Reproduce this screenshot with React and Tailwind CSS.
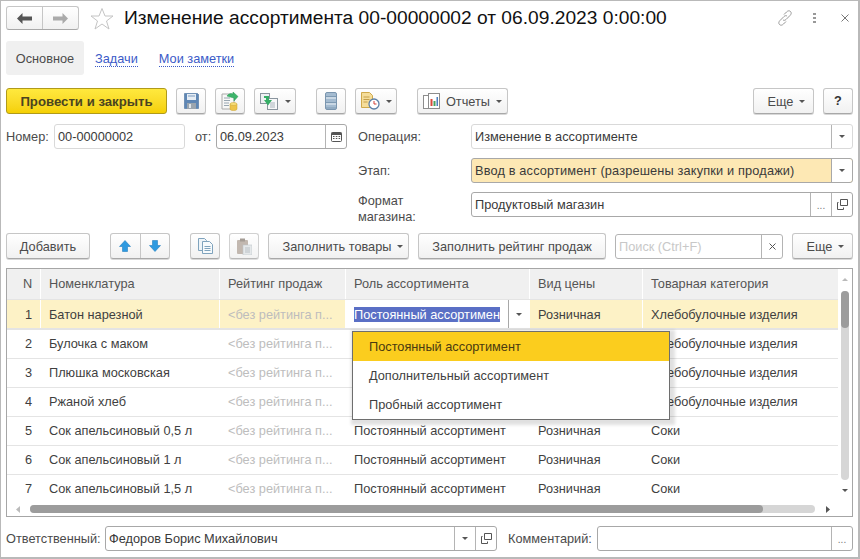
const rows = [
  ['1', 'Батон нарезной', 'Хлебобулочные изделия'],
  ['2', 'Булочка с маком', 'Хлебобулочные изделия'],
  ['3', 'Плюшка московская', 'Хлебобулочные изделия'],
  ['4', 'Ржаной хлеб', 'Хлебобулочные изделия'],
  ['5', 'Сок апельсиновый 0,5 л', 'Соки'],
  ['6', 'Сок апельсиновый 1 л', 'Соки'],
  ['7', 'Сок апельсиновый 1,5 л', 'Соки'],
];

const Caret = ({ className = '' }) => (
  <svg width="6" height="3" viewBox="0 0 6 3" className={className}>
    <path d="M0 0h6L3 3z" fill="#555" />
  </svg>
);

const Btn = ({ className = '', children }) => (
  <button className={`flex h-[26px] shrink-0 items-center justify-center rounded-[3px] border border-[#c6c6c6] border-b-[#a8a8a8] bg-gradient-to-b from-white to-[#f1f1f1] text-[#4b4b4b] shadow-[0_1px_0_#d8d8d8] ${className}`}>
    {children}
  </button>
);

const Side = ({ children, border = 'border-l border-[#b4b4b4]' }) => (
  <span className={`flex h-full shrink-0 items-center justify-center ${border} w-[21px]`}>{children}</span>
);

const Dots = () => <span className="mt-[2px] text-[10px] text-[#777]">...</span>;

const OpenIcon = () => (
  <svg width="11" height="11" viewBox="0 0 11 11" fill="none" stroke="#555">
    <path d="M3.500 0.500h7v6h-7zM1.500 3.500h-1v7h6v-2" />
  </svg>
);

const Field = ({ className = '', bg = 'bg-white', children, sides, muted }) => (
  <div className={`flex h-[25px] items-center rounded-[3px] border ${muted ? 'border-[#d9d9d9]' : 'border-[#a8a8a8]'} ${bg} ${className}`}>
    <span className="min-w-0 flex-1 truncate pl-[3px] pt-[1px] text-[#3a3a3a]">{children}</span>
    {sides}
  </div>
);

const Floppy = () => (
  <svg width="15" height="16" viewBox="0 0 15 16">
    <path d="M0.500 0.500h13l1 1v14h-14z" fill="#5e86b4" stroke="#49729f" strokeWidth="0.6" />
    <rect x="3" y="1" width="9" height="6" fill="#e6edf4" />
    <rect x="4" y="2.500" width="7" height="1" fill="#7d9cbf" />
    <rect x="3" y="10" width="9" height="6" fill="#9ba5ae" />
    <rect x="5" y="11" width="2" height="4" fill="#dfe5ea" />
  </svg>
);

const PostIcon = () => (
  <svg width="18" height="19" viewBox="0 0 18 19">
    <path d="M1 2h9l3 3v12H1z" fill="#f7f7f7" stroke="#aaa" />
    <path d="M3 6h6M3 8.500h6M3 11h5M3 13.500h5" stroke="#9aa7b2" />
    <path d="M9 12v5c0 2 7 2 7 0v-5" fill="#eec44a" stroke="#c9a02f" strokeWidth="0.5" />
    <ellipse cx="12.500" cy="12" rx="3.500" ry="1.500" fill="#f6dc7a" stroke="#c9a02f" strokeWidth="0.5" />
    <path d="M6 4c1-2 4-3 6-2V0l5 4.500L13 9V6c-3-1-5-1-7-2z" fill="#3eb56b" stroke="#2a9a55" strokeWidth="0.5" />
  </svg>
);

const CopyGreen = () => (
  <svg width="18" height="17" viewBox="0 0 18 17">
    <rect x="0.500" y="0.500" width="9" height="10" fill="#eef1f3" stroke="#8a959e" />
    <rect x="7.500" y="5.500" width="10" height="11" fill="#f7f8f9" stroke="#8a959e" />
    <path d="M4 3h5v4h3l-4 5.500L4 7h2V5H4z" fill="#35ae66" />
    <path d="M10 10h5M10 12h5M10 14h5" stroke="#a9b4bc" />
  </svg>
);

const ListIcon = () => (
  <svg width="12" height="18" viewBox="0 0 12 18">
    <rect x="0.500" y="0.500" width="11" height="17" rx="1.500" fill="#a4bbd0" stroke="#7a95ae" />
    <path d="M1 6h10M1 12h10" stroke="#eef3f7" />
    <path d="M1 4.500h10M1 10.500h10M1 16h10" stroke="#7e9ab3" />
  </svg>
);

const DocClock = () => (
  <svg width="19" height="18" viewBox="0 0 19 18">
    <path d="M0.500 0.500h8l3 3v12h-11z" fill="#f5dd9a" stroke="#cfa94c" />
    <path d="M2.500 5h6M2.500 7.500h6M2.500 10h4" stroke="#c49f4a" />
    <circle cx="13" cy="12" r="5" fill="#fff" stroke="#5c7fa6" strokeWidth="1.300" />
    <path d="M13 9v3h2.500" stroke="#d33f36" fill="none" />
  </svg>
);

const ReportIcon = () => (
  <svg width="17" height="17" viewBox="0 0 17 17">
    <rect x="0.500" y="2.500" width="10" height="13" fill="#fff" stroke="#8c8c8c" />
    <rect x="5.500" y="0.500" width="11" height="15" fill="#fff" stroke="#8c8c8c" />
    <rect x="7.500" y="6" width="2" height="7" fill="#d94a3d" />
    <rect x="10.500" y="8" width="2" height="5" fill="#49a35f" />
    <rect x="13.500" y="4" width="1.500" height="9" fill="#4c7fc0" />
  </svg>
);

const Arrow = ({ down }) => (
  <svg width="12" height="12" viewBox="0 0 12 12" className={down ? 'rotate-180' : ''}>
    <path d="M6 0.500 11.500 6.500H8.500V11.500H3.500V6.500H0.500z" fill="#2e9ae0" stroke="#2580c0" strokeWidth="0.6" />
  </svg>
);

const CopyIcon = () => (
  <svg width="15" height="16" viewBox="0 0 15 16" fill="none" stroke="#7fa3bd">
    <path d="M0.500 0.500h6l2 2v10h-8z" fill="#eef4f8" />
    <path d="M4.500 3.500h7l3 3v9h-10z" fill="#f6fafc" />
    <path d="M6.500 8.500h6M6.500 10.500h6M6.500 12.500h6" />
  </svg>
);

const PasteIcon = () => (
  <svg width="15" height="17" viewBox="0 0 15 17">
    <rect x="0" y="2" width="11" height="14" rx="1" fill="#b3a79d" />
    <rect x="3" y="0.500" width="5" height="3" fill="#8f857c" />
    <rect x="6" y="7" width="9" height="10" fill="#dfe3e6" stroke="#b0b7bc" strokeWidth="0.6" />
    <path d="M8 10h5M8 12h5M8 14h5" stroke="#a9b1b7" />
  </svg>
);

const HCell = ({ className = '', children }) => (
  <div className={`flex h-[30px] items-center bg-[#f0f0f0] pl-[8px] text-[#555] ${className}`}>{children}</div>
);

export default function App() {
  return (
    <div className="relative flex h-[559px] w-[860px] flex-col overflow-hidden border border-r-2 border-b-2 border-[#b9b9b9] bg-white px-[5px] font-['Liberation_Sans',Arial,sans-serif] text-[12.75px] text-[#4b4b4b]">
      {/* Title */}
      <div className="mt-[5px] flex h-[24px] shrink-0 items-center">
        <div className="flex h-[24px] w-[73px] rounded-[3px] border border-[#c6c6c6] border-b-[#a8a8a8] bg-gradient-to-b from-white to-[#f1f1f1]">
          <span className="flex flex-1 items-center justify-center border-r border-[#c6c6c6]">
            <svg width="15" height="11" viewBox="0 0 15 11"><path d="M0 5.500 5.500 0v3.500H15v4H5.500V11z" fill="#555" /></svg>
          </span>
          <span className="flex flex-1 items-center justify-center">
            <svg width="15" height="11" viewBox="0 0 15 11"><path d="M15 5.500 9.500 0v3.500H0v4h9.500V11z" fill="#aaa" /></svg>
          </span>
        </div>
        <svg width="24" height="23" viewBox="0 0 24 23" className="ml-[11px]" fill="none" stroke="#c4c4c4">
          <path d="M12 1.500 15 9h8l-6.500 5 2.500 8-7-5-7 5 2.500-8L1 9h8z" />
        </svg>
        <h1 className="ml-[10px] whitespace-nowrap text-[19.2px] font-normal text-[#111]">Изменение ассортимента 00-00000002 от 06.09.2023 0:00:00</h1>
        <div className="ml-auto flex items-center">
          <svg width="16" height="16" viewBox="0 0 16 16" fill="none" stroke="#999" strokeWidth="1">
            <path d="M7 4.500 9.500 2c1.500-1.500 3-1.500 4-.5s1 2.500-.5 4L9 9.500c-1 1-2 1-3 .5M9 11.500 6.500 14c-1.500 1.500-3 1.500-4 .5s-1-2.500.5-4L7 6.500c1-1 2-1 3-.5" />
          </svg>
          <span className="ml-[20px] flex flex-col gap-[2px]">
            <span className="h-[2px] w-[3px] bg-[#999]" />
            <span className="h-[2px] w-[3px] bg-[#999]" />
            <span className="h-[2px] w-[3px] bg-[#999]" />
          </span>
          <svg width="8" height="8" viewBox="0 0 8 8" className="ml-[25px] mr-[4px]" stroke="#777"><path d="M0.500 0.500l7 7M7.500 0.500l-7 7" /></svg>
        </div>
      </div>

      {/* Tabs */}
      <div className="mt-[11px] flex h-[34px] shrink-0 items-center">
        <span className="flex h-full w-[78px] items-center justify-center rounded-[3px] bg-[#f0f0f0] pt-[2px]">Основное</span>
        <span className="ml-[11px] mt-[2px] border-b border-dotted border-[#3b5bc8] leading-[14px] text-[#3b5bc8]">Задачи</span>
        <span className="ml-[21px] mt-[2px] border-b border-dotted border-[#3b5bc8] leading-[14px] text-[#3b5bc8]">Мои заметки</span>
      </div>

      {/* Command bar */}
      <div className="mt-[13px] flex shrink-0 items-center">
        <button className="flex h-[26px] w-[161px] items-center justify-center rounded-[3px] border border-[#b09a1a] bg-gradient-to-b from-[#ffe93d] to-[#f5d000] pt-[1px] text-[13.2px] font-bold text-[#4a4420]">Провести и закрыть</button>
        <Btn className="ml-[9px] w-[30px]"><Floppy /></Btn>
        <Btn className="ml-[9px] w-[30px]"><PostIcon /></Btn>
        <Btn className="ml-[9px] w-[42px] gap-[7px]"><CopyGreen /><Caret /></Btn>
        <Btn className="ml-[20px] w-[30px]"><ListIcon /></Btn>
        <Btn className="ml-[9px] w-[42px] gap-[6px]"><DocClock /><Caret /></Btn>
        <Btn className="ml-[20px] w-[91px] gap-[6px] pt-[1px]"><ReportIcon /><span>Отчеты</span><Caret /></Btn>
        <Btn className="ml-auto w-[61px] gap-[6px] pl-[6px] pt-[1px]"><span>Еще</span><Caret /></Btn>
        <Btn className="ml-[9px] w-[30px] font-bold text-[#333]">?</Btn>
      </div>

      {/* Form */}
      <div className="mt-[10px] flex h-[93px] shrink-0 items-start">
        <span className="mt-[3px] w-[48px]">Номер:</span>
        <Field className="w-[131px]" muted>00-00000002</Field>
        <span className="ml-[10px] mt-[3px] w-[21px]">от:</span>
        <Field className="w-[131px]" sides={
          <Side>
            <svg width="11" height="11" viewBox="0 0 11 11">
              <rect x="0.500" y="1.500" width="10" height="9" rx="1" fill="#fff" stroke="#555" />
              <rect x="0.500" y="1.500" width="10" height="2.500" fill="#555" />
              <path d="M2 5.500h1.500M4.800 5.500h1.500M7.600 5.500h1.500M2 7.500h1.500M4.800 7.500h1.500M7.600 7.500h1.500" stroke="#555" />
            </svg>
          </Side>
        }>06.09.2023</Field>
        <div className="ml-[11px] grid flex-1 grid-cols-[113px_382px] gap-y-[9px]">
          <span className="self-center pt-[1px]">Операция:</span>
          <Field muted sides={<Side><Caret /></Side>}>Изменение в ассортименте</Field>
          <span className="self-center pt-[1px]">Этап:</span>
          <Field bg="bg-[#fde8b4]" sides={<span className="flex h-full w-[21px] shrink-0 items-center justify-center rounded-r-[3px] border-l border-[#a8a8a8] bg-white"><Caret /></span>}>
            <span className="tracking-[0.16px]">Ввод в ассортимент (разрешены закупки и продажи)</span>
          </Field>
          <span className="self-center pt-[1px] leading-[16px]">Формат<br />магазина:</span>
          <Field sides={<><Side><Dots /></Side><Side><OpenIcon /></Side></>}>Продуктовый магазин</Field>
        </div>
      </div>

      {/* Table commands */}
      <div className="mt-[16px] flex shrink-0 items-center">
        <Btn className="w-[84px] pt-[1px]">Добавить</Btn>
        <div className="ml-[20px] flex h-[26px] w-[60px] rounded-[3px] border border-[#c6c6c6] border-b-[#a8a8a8] bg-gradient-to-b from-white to-[#f1f1f1] shadow-[0_1px_0_#d8d8d8]">
          <span className="flex flex-1 items-center justify-center border-r border-[#c6c6c6]"><Arrow /></span>
          <span className="flex flex-1 items-center justify-center"><Arrow down /></span>
        </div>
        <Btn className="ml-[20px] w-[30px]"><CopyIcon /></Btn>
        <Btn className="ml-[9px] w-[30px] opacity-80"><PasteIcon /></Btn>
        <Btn className="ml-[9px] w-[141px] gap-[6px] pl-[9px] pt-[1px]"><span>Заполнить товары</span><Caret /></Btn>
        <Btn className="ml-[9px] w-[188px] pt-[1px]">Заполнить рейтинг продаж</Btn>
        <div className="ml-[9px] flex h-[25px] w-[168px] items-center rounded-[3px] border border-[#b4b4b4] bg-white">
          <span className="flex-1 pl-[3px] pt-[1px] text-[#c8c8c8]">Поиск (Ctrl+F)</span>
          <Side><svg width="7" height="7" viewBox="0 0 7 7" stroke="#555"><path d="M0.500 0.500l6 6M6.500 0.500l-6 6" /></svg></Side>
        </div>
        <Btn className="ml-[9px] w-[61px] gap-[6px] pl-[6px] pt-[1px]"><span>Еще</span><Caret /></Btn>
      </div>

      {/* Table */}
      <div className="relative mt-[9px] flex h-[249px] shrink-0 flex-col border border-[#a6a6a6] text-[#3f3f3f]">
        <div className="flex min-h-0 flex-1">
          <div className="flex-1">
            <div className="grid grid-cols-[33px_178px_125px_183px_112px_1fr] gap-x-[1px] border-b border-[#e4e4e4] bg-white">
              <HCell className="justify-center pl-0">N</HCell>
              <HCell>Номенклатура</HCell>
              <HCell>Рейтинг продаж</HCell>
              <HCell>Роль ассортимента</HCell>
              <HCell>Вид цены</HCell>
              <HCell>Товарная категория</HCell>
            </div>
            {rows.map((r, i) => {
              const current = i === 0 ? 'bg-[#fdf2c6] pt-[1px]' : '';
              // rows 2-4 of the role and price columns sit under the open list
              const covered = i > 0 && i < 4;
              return (
                <div key={r[0]} className={`grid grid-cols-[33px_178px_125px_183px_112px_1fr] gap-x-[1px] ${i === 0 ? 'h-[30px] border-b-2 border-[#e4e4e4] bg-white' : 'h-[29px] border-b'} ${i === 6 ? 'border-transparent' : 'border-[#e4e4e4]'}`}>
                  <div className={`flex items-center justify-end pr-[8px] ${current}`}>{r[0]}</div>
                  <div className={`flex items-center pl-[8px] ${current}`}>{r[1]}</div>
                  <div className={`flex items-center pl-[8px] text-[#bdbdbd] ${current}`}>{'<без рейтинга п...'}</div>
                  {i === 0 && (
                    <div className="flex items-center pl-[8px]">
                      <span className="flex-1 overflow-hidden whitespace-nowrap pt-[1px]"><span className="bg-[#5a6fc5] text-white">Постоянный ассортимен</span></span>
                      <span className="flex h-full w-[21px] items-center justify-center border-l border-[#a8a8a8]"><Caret /></span>
                    </div>
                  )}
                  {i > 0 && <div className="flex items-center pl-[8px]">{covered ? '' : 'Постоянный ассортимент'}</div>}
                  <div className={`flex items-center pl-[8px] ${current}`}>{covered ? '' : 'Розничная'}</div>
                  <div className={`flex items-center pl-[8px] ${current}`}>{r[2]}</div>
                </div>
              );
            })}
          </div>
          {/* Vertical scrollbar */}
          <div className="flex w-[14px] shrink-0 flex-col items-center pt-[9px] pb-[10px]">
            <Caret className="rotate-180 opacity-40" />
            <div className="mt-[10px] w-[8px] flex-1 rounded-[4px] bg-[#d6d6d6]">
              <div className="h-[37px] rounded-[4px] bg-[#9c9c9c]" />
            </div>
            <Caret className="mt-[9px]" />
          </div>
        </div>
        {/* Horizontal scrollbar */}
        <div className="flex h-[14px] shrink-0 items-center pl-[9px] pr-[22px]">
          <svg width="4" height="7" viewBox="0 0 4 7"><path d="M4 0v7L0 3.500z" fill="#bbb" /></svg>
          <div className="ml-[10px] h-[8px] flex-1 rounded-[4px] bg-[#d6d6d6]">
            <div className="h-full w-[733px] rounded-[4px] bg-[#9c9c9c]" />
          </div>
          <svg width="4" height="7" viewBox="0 0 4 7" className="ml-[11px]"><path d="M0 0v7l4-3.500z" fill="#555" /></svg>
        </div>

        {/* Dropdown */}
        <div className="absolute left-[345px] top-[62px] z-10 w-[318px] border border-[#6e6e6e] bg-white shadow-[2px_2px_3px_3px_rgba(0,0,0,0.12)]">
          <div className="flex h-[29px] items-center bg-[#fbcd1e] pl-[16px] text-[#4a3a10]">Постоянный ассортимент</div>
          <div className="flex h-[29px] items-center pl-[16px]">Дополнительный ассортимент</div>
          <div className="flex h-[29px] items-center pl-[16px]">Пробный ассортимент</div>
        </div>
      </div>

      {/* Footer */}
      <div className="mt-[9px] flex shrink-0 items-center">
        <span className="w-[99px] pt-[1px]">Ответственный:</span>
        <Field className="w-[392px]" sides={<><Side><Caret /></Side><Side><OpenIcon /></Side></>}>Федоров Борис Михайлович</Field>
        <span className="ml-[11px] w-[89px] pt-[1px]">Комментарий:</span>
        <Field className="w-[256px]" sides={<Side><Dots /></Side>}>{''}</Field>
      </div>
    </div>
  );
}
